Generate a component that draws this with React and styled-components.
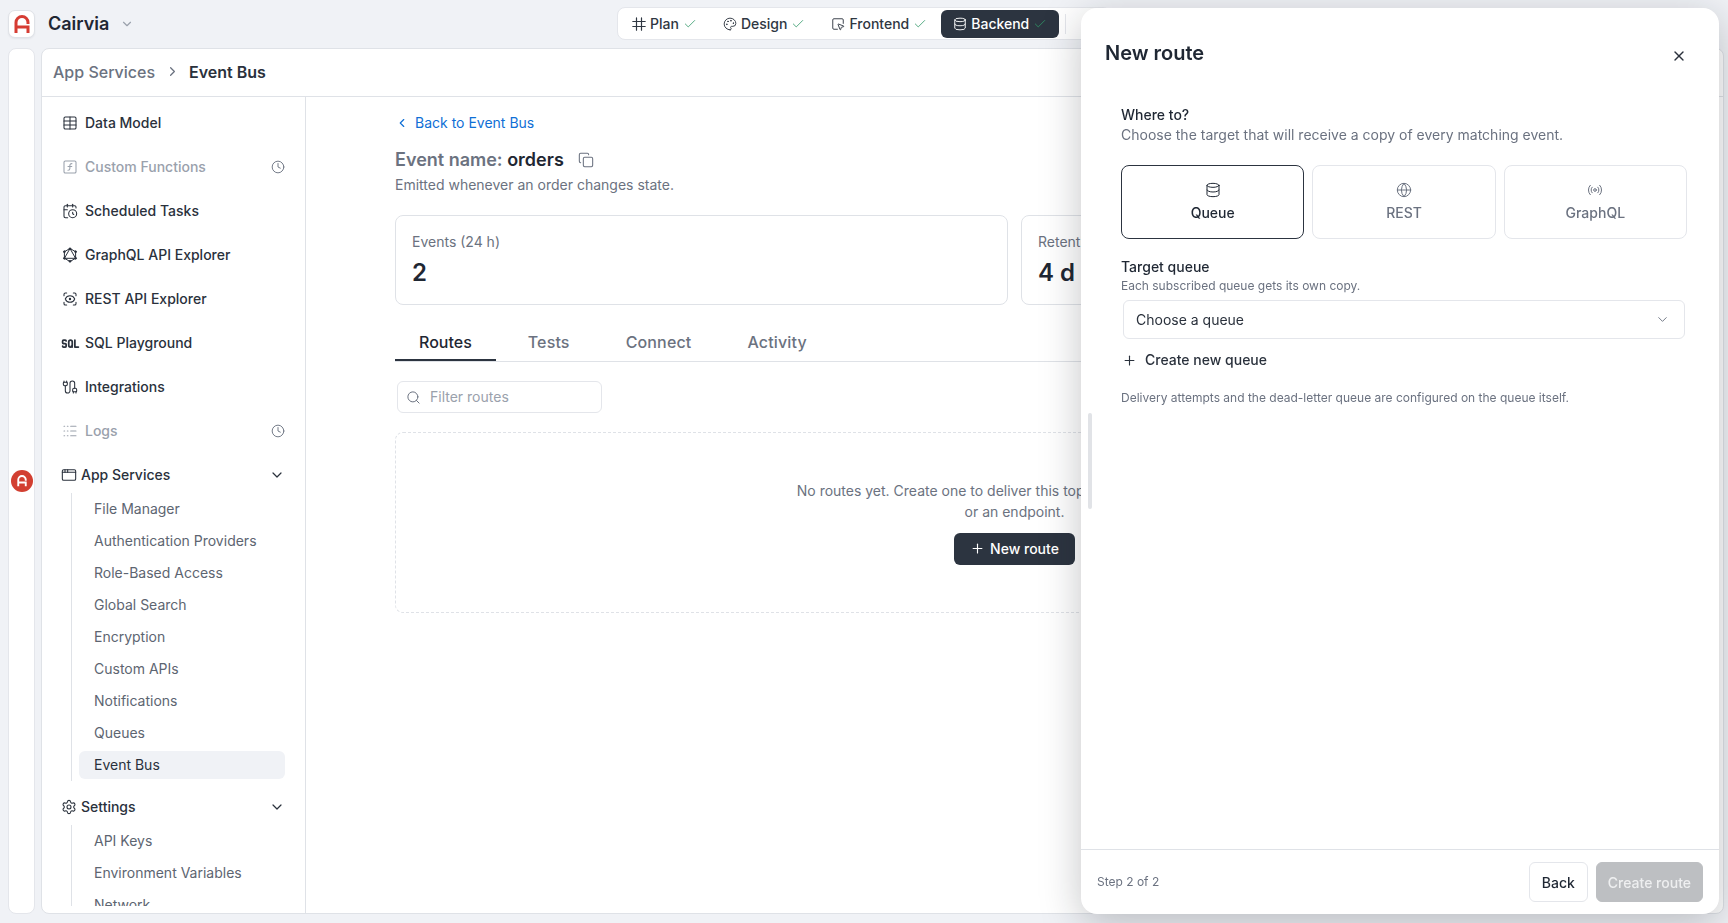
// import react
import React from "react";
import styled, { createGlobalStyle } from "styled-components";
import {
  AppWindow,
  Cable,
  CalendarClock,
  Check,
  ChevronDown,
  ChevronLeft,
  ChevronRight,
  Clock,
  Copy,
  Database,
  Globe,
  Logs,
  Palette,
  Plus,
  Radio,
  ScanEye,
  Search,
  Settings,
  SquareFunction,
  SquareMousePointer,
  Table,
  X,
} from "lucide-react";
import { TbSql } from "react-icons/tb";

const GlobalStyle = createGlobalStyle`
  html, body, #root {
    margin: 0;
    height: 100%;
  }
  body {
    overflow: hidden;
    background: #f0f2f6;
    color: #1f2733;
    font-family: Inter, "Noto Sans", sans-serif;
    font-size: 14px;
    line-height: 20px;
  }
  * {
    box-sizing: border-box;
  }
`;

const Shell = styled.div`
  display: flex;
  flex-direction: column;
  height: 100vh;
`;

const TopBar = styled.header`
  display: grid;
  grid-template-columns: 1fr auto 1fr;
  align-items: start;
  height: 48px;
  flex: none;
  padding: 0 8px;
`;

const Brand = styled.div`
  display: flex;
  align-items: center;
  height: 28px;
  margin-top: 10px;
`;

const LogoBox = styled.div`
  display: flex;
  align-items: center;
  justify-content: center;
  flex: none;
  width: 27px;
  height: 28px;
  background: #fff;
  border: 1px solid #dfe2e7;
  border-radius: 7px;
  box-shadow: 0 1px 2px rgba(20, 24, 32, 0.06);
`;

const BrandName = styled.span`
  margin-left: 13px;
  font-size: 18px;
  font-weight: 600;
  color: #1f2733;
`;

const BrandChevron = styled(ChevronDown)`
  margin-left: 11px;
  color: #9aa1ac;
`;

const StageBar = styled.nav`
  display: flex;
  align-items: center;
  gap: 2px;
  width: 494px;
  height: 33px;
  margin-top: 7px;
  padding: 0 1px 0 2px;
  overflow: hidden;
  background: #fff;
  border: 1px solid #e4e6eb;
  border-radius: 8px;
`;

const Stage = styled.div`
  display: flex;
  align-items: center;
  flex: none;
  gap: 4px;
  height: 28px;
  padding: 0 12px;
  border-radius: 6px;
  font-weight: 500;
  background: ${({ $active }) => ($active ? "#2c3440" : "transparent")};
  color: ${({ $active }) => ($active ? "#fff" : "#2f3742")};

  & > svg:last-child {
    color: ${({ $active }) => ($active ? "#2f8f63" : "#3f9f72")};
  }
`;

const StageDivider = styled.span`
  flex: none;
  width: 1px;
  height: 20px;
  margin-left: 4px;
  background: #e4e6eb;
`;

const Body = styled.div`
  display: flex;
  flex: 1;
  min-height: 0;
  gap: 6px;
  padding: 0 4px 9px 8px;
`;

const Rail = styled.aside`
  display: flex;
  align-items: center;
  justify-content: center;
  flex: none;
  width: 27px;
  background: #fff;
  border: 1px solid #e4e6eb;
  border-radius: 8px;
`;

const RailBadge = styled.div`
  display: flex;
  align-items: center;
  justify-content: center;
  flex: none;
  width: 22px;
  height: 22px;
  margin-left: 1px;
  border-radius: 50%;
  background: #d23f31;
`;

const Main = styled.main`
  display: flex;
  flex-direction: column;
  flex: 1;
  min-width: 0;
  background: #fff;
  border: 1px solid #dfe2e7;
  border-radius: 8px;
  overflow: hidden;
`;

const Breadcrumb = styled.div`
  display: flex;
  align-items: center;
  flex: none;
  height: 48px;
  padding: 0 0 2px 11px;
  font-size: 16px;
  border-bottom: 1px solid #dfe2e7;
`;

const CrumbParent = styled.span`
  font-weight: 500;
  color: #6b7280;
`;

const CrumbChevron = styled(ChevronRight)`
  margin: 0 9px 0 10px;
  color: #6b7280;
`;

const CrumbCurrent = styled.span`
  font-weight: 600;
  color: #2a313c;
`;

const Columns = styled.div`
  display: flex;
  flex: 1;
  min-height: 0;
`;

const Sidebar = styled.div`
  display: flex;
  flex-direction: column;
  flex: none;
  width: 264px;
  padding: 4px 0 7px;
  border-right: 1px solid #dfe2e7;
`;

const SideScroll = styled.div`
  flex: 1;
  min-height: 0;
  overflow: hidden;
`;

const NavRow = styled.div`
  display: flex;
  align-items: center;
  height: 44px;
  padding: 0 20px;
  font-weight: 500;
  color: ${({ $muted }) => ($muted ? "#9aa1ac" : "#2a313c")};

  & > svg:last-child:not(:first-child) {
    margin-left: auto;
    color: #6b7280;
  }
`;

const NavIcon = styled.span`
  display: flex;
  align-items: center;
  justify-content: center;
  flex: none;
  width: 16px;
  margin-right: 7px;

  & > svg {
    flex: none;
  }
`;

const Group = styled.div`
  margin-top: 4px;

  & + & {
    margin-top: 8px;
  }
`;

const GroupHead = styled.div`
  display: flex;
  align-items: center;
  height: 36px;
  padding: 0 20px 0 19px;
  font-weight: 500;
  color: #2a313c;

  & > svg:first-child {
    margin-right: 4px;
  }
  & > svg:last-child {
    margin-left: auto;
  }
`;

const SubList = styled.div`
  display: flex;
  flex-direction: column;
  gap: 4px;
  margin: 0 20px 0 29px;
  padding: 2px 0 2px 7px;
  border-left: 1px solid #dfe2e7;
`;

const SubItem = styled.div`
  display: flex;
  align-items: center;
  flex: none;
  height: 28px;
  padding-left: 15px;
  border-radius: 6px;
  color: ${({ $active }) => ($active ? "#2a313c" : "#5d6571")};
  background: ${({ $active }) => ($active ? "#f0f2f6" : "transparent")};
`;

const Content = styled.section`
  flex: 1;
  min-width: 0;
  padding: 16px 89px 0;
`;

const BackLink = styled.a`
  display: flex;
  align-items: center;
  gap: 6px;
  color: #0f6fd6;
`;

const TitleRow = styled.div`
  display: flex;
  align-items: center;
  gap: 14px;
  margin-top: 13px;
  height: 28px;
  font-size: 18px;
  font-weight: 600;
`;

const TitleKey = styled.span`
  color: #6b7280;
  font-weight: 600;
`;

const TitleValue = styled.span`
  color: #1f2733;
`;

const CopyIcon = styled(Copy)`
  color: #6b7280;
`;

const Subtitle = styled.p`
  margin: 1px 0 0;
  color: #6b7280;
`;

const Stats = styled.div`
  display: grid;
  grid-template-columns: 1fr 1fr;
  gap: 13px;
  margin-top: 20px;
`;

const StatCard = styled.div`
  height: 90px;
  padding: 16px;
  border: 1px solid #dfe2e7;
  border-radius: 8px;
`;

const StatLabel = styled.div`
  color: #6b7280;
`;

const StatValue = styled.div`
  margin-top: 5px;
  font-size: 24px;
  line-height: 32px;
  font-weight: 600;
  color: #1f2733;
`;

const Tabs = styled.div`
  display: flex;
  gap: 8px;
  margin-top: 17px;
  padding-top: 8px;
  border-bottom: 1px solid #dfe2e7;
`;

const Tab = styled.div`
  padding: 0 24px 7px;
  font-size: 16px;
  line-height: 24px;
  font-weight: 500;
  letter-spacing: ${({ $active }) => ($active ? "0" : "0.15px")};
  color: ${({ $active }) => ($active ? "#1f2733" : "#6b7280")};
  box-shadow: ${({ $active }) => ($active ? "inset 0 -2px 0 #2c3440" : "none")};
`;

const FilterBox = styled.div`
  display: flex;
  align-items: center;
  width: 205px;
  height: 32px;
  margin: 19px 0 0 2px;
  padding-left: 8px;
  gap: 9px;
  border: 1px solid #e4e6eb;
  border-radius: 6px;
  color: #6b7280;
`;

const FilterInput = styled.span`
  color: #9aa1ac;
`;

const EmptyState = styled.div`
  display: flex;
  flex-direction: column;
  align-items: center;
  justify-content: center;
  height: 181px;
  margin-top: 19px;
  border: 1px dashed #dfe2e7;
  border-radius: 8px;
`;

const EmptyText = styled.p`
  width: 440px;
  margin: -1px 0 0;
  line-height: 21px;
  text-align: center;
  color: #6b7280;
`;

const PrimaryButton = styled.button`
  display: flex;
  align-items: center;
  gap: 5px;
  height: 32px;
  margin-top: 11px;
  padding: 0 16px;
  border: 0;
  border-radius: 6px;
  background: #2c3440;
  color: #fff;
  font: 500 14px Inter, sans-serif;
`;

const Panel = styled.aside`
  position: fixed;
  top: 8px;
  left: 1081px;
  bottom: 9px;
  width: 638px;
  display: flex;
  flex-direction: column;
  background: #fff;
  border-radius: 16px;
  box-shadow: 0 10px 40px rgba(20, 24, 32, 0.25);
`;

const DragHandle = styled.span`
  position: absolute;
  left: 7px;
  top: 405px;
  width: 4px;
  height: 96px;
  border-radius: 2px;
  background: #e1e3e7;
`;

const PanelHead = styled.div`
  display: flex;
  align-items: flex-start;
  justify-content: space-between;
  flex: none;
  padding: 31px 32px 0 24px;
`;

const PanelTitle = styled.h2`
  margin: 0;
  font-size: 20px;
  line-height: 28px;
  font-weight: 600;
  color: #1f2733;
`;

const CloseIcon = styled(X)`
  margin-top: 9px;
  color: #2a313c;
`;

const PanelBody = styled.div`
  flex: 1;
  min-height: 0;
  padding: 38px 32px 0 40px;
`;

const FieldTitle = styled.div`
  font-weight: 500;
  color: #1f2733;
`;

const FieldHelp = styled.div`
  color: #6b7280;
`;

const TargetGrid = styled.div`
  display: grid;
  grid-template-columns: repeat(3, 1fr);
  gap: 8px;
  margin-top: 20px;
`;

const TargetCard = styled.div`
  display: flex;
  flex-direction: column;
  align-items: center;
  justify-content: center;
  gap: 5px;
  height: 74px;
  border: 1px solid ${({ $active }) => ($active ? "#2c3440" : "#e4e6eb")};
  border-radius: 8px;
  font-weight: 500;
  color: ${({ $active }) => ($active ? "#1f2733" : "#6b7280")};
`;

const QueueField = styled.div`
  margin-top: 18px;
`;

const SmallHelp = styled.div`
  margin-top: 1px;
  font-size: 12px;
  line-height: 16px;
  color: #6b7280;
`;

const SelectBox = styled.div`
  display: flex;
  align-items: center;
  justify-content: space-between;
  height: 39px;
  margin: 6px 2px 0;
  padding: 0 14px 0 12px;
  border: 1px solid #e4e6eb;
  border-radius: 6px;
  color: #2a313c;

  & > svg {
    color: #6b7280;
  }
`;

const CreateLink = styled.div`
  display: flex;
  align-items: center;
  gap: 8px;
  margin: 11px 0 0 1px;
  font-weight: 500;
  color: #2a313c;
`;

const FootNote = styled.div`
  margin-top: 20px;
  font-size: 12px;
  line-height: 16px;
  color: #6b7280;
`;

const PanelFoot = styled.div`
  display: flex;
  align-items: center;
  justify-content: space-between;
  flex: none;
  height: 65px;
  padding: 0 16px;
  border-top: 1px solid #dfe2e7;
`;

const StepText = styled.span`
  font-size: 12px;
  color: #6b7280;
`;

const FootActions = styled.div`
  display: flex;
  gap: 8px;
`;

const FootButton = styled.button`
  height: 40px;
  padding: 0 ${({ $primary }) => ($primary ? "11px" : "12px")};
  border-radius: 6px;
  border: 1px solid ${({ $primary }) => ($primary ? "#bdbfc2" : "#e4e6eb")};
  background: ${({ $primary }) => ($primary ? "#bdbfc2" : "#fff")};
  color: ${({ $primary }) => ($primary ? "#eeeff0" : "#1f2733")};
  font: 500 14px Inter, sans-serif;
`;

const AppLogo = ({ color = "#d63c33", size = 16 }) => (
  <svg width={size} height={size * 1.13} viewBox="0 0 16 18" fill="none" stroke={color} strokeWidth="3">
    <path d="M2 18V7.500a6 6 0 0 1 12 0V9" />
    <path d="M2 12h12v6" />
  </svg>
);

const PlanIcon = ({ size }) => (
  <svg width={size} height={size} viewBox="0 0 14 14" fill="none" stroke="currentColor" strokeWidth="1.2" strokeLinecap="round">
    <path d="M4.500 .8v12.400M9.500 .8v12.400M.8 4.500h12.400M.8 9.500h12.400" />
  </svg>
);

const GraphqlIcon = () => (
  <svg width="16" height="16" viewBox="0 0 16 16" fill="none" stroke="currentColor" strokeWidth="1">
    <path d="M8 1.500 13.600 4.700v6.600L8 14.500 2.400 11.300V4.700Z" />
    <path d="M8 1.500 13.600 11.300H2.400Z" />
    <circle cx="8" cy="1.800" r=".9" fill="currentColor" />
    <circle cx="13.600" cy="4.700" r=".9" fill="currentColor" />
    <circle cx="13.600" cy="11.300" r=".9" fill="currentColor" />
    <circle cx="8" cy="14.300" r=".9" fill="currentColor" />
    <circle cx="2.400" cy="11.300" r=".9" fill="currentColor" />
    <circle cx="2.400" cy="4.700" r=".9" fill="currentColor" />
  </svg>
);

const stages = [
  { name: "Plan", icon: PlanIcon },
  { name: "Design", icon: Palette },
  { name: "Frontend", icon: SquareMousePointer },
  { name: "Backend", icon: Database, active: true },
];

const navItems = [
  { name: "Data Model", icon: <Table size={16} strokeWidth={1.6} /> },
  { name: "Custom Functions", icon: <SquareFunction size={16} strokeWidth={1.6} />, muted: true, soon: true },
  { name: "Scheduled Tasks", icon: <CalendarClock size={16} strokeWidth={1.6} /> },
  { name: "GraphQL API Explorer", icon: <GraphqlIcon /> },
  { name: "REST API Explorer", icon: <ScanEye size={16} strokeWidth={1.6} /> },
  { name: "SQL Playground", icon: <TbSql size={21} /> },
  { name: "Integrations", icon: <Cable size={16} strokeWidth={1.6} /> },
  { name: "Logs", icon: <Logs size={16} strokeWidth={1.6} />, muted: true, soon: true },
];

const appServices = [
  "File Manager",
  "Authentication Providers",
  "Role-Based Access",
  "Global Search",
  "Encryption",
  "Custom APIs",
  "Notifications",
  "Queues",
  "Event Bus",
];

const settings = ["API Keys", "Environment Variables", "Network"];

const targets = [
  { name: "Queue", icon: Database, active: true },
  { name: "REST", icon: Globe },
  { name: "GraphQL", icon: Radio },
];

const App = () => (
  <Shell>
    <GlobalStyle />
    <TopBar>
      <Brand>
        <LogoBox>
          <AppLogo />
        </LogoBox>
        <BrandName>Cairvia</BrandName>
        <BrandChevron size={14} />
      </Brand>
      <StageBar>
        {stages.map(({ name, icon: Icon, active }) => (
          <Stage key={name} $active={active}>
            <Icon size={14} strokeWidth={1.6} />
            {name}
            <Check size={14} strokeWidth={1.5} />
          </Stage>
        ))}
        <StageDivider />
      </StageBar>
    </TopBar>
    <Body>
      <Rail>
        <RailBadge>
          <AppLogo color="#fff" size={10} />
        </RailBadge>
      </Rail>
      <Main>
        <Breadcrumb>
          <CrumbParent>App Services</CrumbParent>
          <CrumbChevron size={15} />
          <CrumbCurrent>Event Bus</CrumbCurrent>
        </Breadcrumb>
        <Columns>
          <Sidebar>
            <SideScroll>
              {navItems.map((item) => (
                <NavRow key={item.name} $muted={item.muted}>
                  <NavIcon>{item.icon}</NavIcon>
                  {item.name}
                  {item.soon && <Clock size={14} strokeWidth={1.6} />}
                </NavRow>
              ))}
              <Group>
                <GroupHead>
                  <AppWindow size={16} strokeWidth={1.6} />
                  App Services
                  <ChevronDown size={16} strokeWidth={1.8} />
                </GroupHead>
                <SubList>
                  {appServices.map((name) => (
                    <SubItem key={name} $active={name === "Event Bus"}>
                      {name}
                    </SubItem>
                  ))}
                </SubList>
              </Group>
              <Group>
                <GroupHead>
                  <Settings size={16} strokeWidth={1.6} />
                  Settings
                  <ChevronDown size={16} strokeWidth={1.8} />
                </GroupHead>
                <SubList>
                  {settings.map((name) => (
                    <SubItem key={name}>{name}</SubItem>
                  ))}
                </SubList>
              </Group>
            </SideScroll>
          </Sidebar>
          <Content>
            <BackLink>
              <ChevronLeft size={14} />
              Back to Event Bus
            </BackLink>
            <TitleRow>
              <span>
                <TitleKey>Event name: </TitleKey>
                <TitleValue>orders</TitleValue>
              </span>
              <CopyIcon size={16} strokeWidth={1.6} />
            </TitleRow>
            <Subtitle>Emitted whenever an order changes state.</Subtitle>
            <Stats>
              <StatCard>
                <StatLabel>Events (24 h)</StatLabel>
                <StatValue>2</StatValue>
              </StatCard>
              <StatCard>
                <StatLabel>Retention</StatLabel>
                <StatValue>4 d</StatValue>
              </StatCard>
            </Stats>
            <Tabs>
              <Tab $active>Routes</Tab>
              <Tab>Tests</Tab>
              <Tab>Connect</Tab>
              <Tab>Activity</Tab>
            </Tabs>
            <FilterBox>
              <Search size={15} strokeWidth={1.6} />
              <FilterInput>Filter routes</FilterInput>
            </FilterBox>
            <EmptyState>
              <EmptyText>
                No routes yet. Create one to deliver this topic to a queue, function or an endpoint.
              </EmptyText>
              <PrimaryButton>
                <Plus size={15} strokeWidth={1.8} />
                New route
              </PrimaryButton>
            </EmptyState>
          </Content>
        </Columns>
      </Main>
    </Body>
    <Panel>
      <DragHandle />
      <PanelHead>
        <PanelTitle>New route</PanelTitle>
        <CloseIcon size={16} />
      </PanelHead>
      <PanelBody>
        <FieldTitle>Where to?</FieldTitle>
        <FieldHelp>Choose the target that will receive a copy of every matching event.</FieldHelp>
        <TargetGrid>
          {targets.map(({ name, icon: Icon, active }) => (
            <TargetCard key={name} $active={active}>
              <Icon size={16} strokeWidth={1.5} />
              {name}
            </TargetCard>
          ))}
        </TargetGrid>
        <QueueField>
          <FieldTitle>Target queue</FieldTitle>
          <SmallHelp>Each subscribed queue gets its own copy.</SmallHelp>
          <SelectBox>
            Choose a queue
            <ChevronDown size={15} strokeWidth={1.5} />
          </SelectBox>
          <CreateLink>
            <Plus size={15} strokeWidth={1.8} />
            Create new queue
          </CreateLink>
          <FootNote>Delivery attempts and the dead-letter queue are configured on the queue itself.</FootNote>
        </QueueField>
      </PanelBody>
      <PanelFoot>
        <StepText>Step 2 of 2</StepText>
        <FootActions>
          <FootButton>Back</FootButton>
          <FootButton $primary>Create route</FootButton>
        </FootActions>
      </PanelFoot>
    </Panel>
  </Shell>
);

export default App;
